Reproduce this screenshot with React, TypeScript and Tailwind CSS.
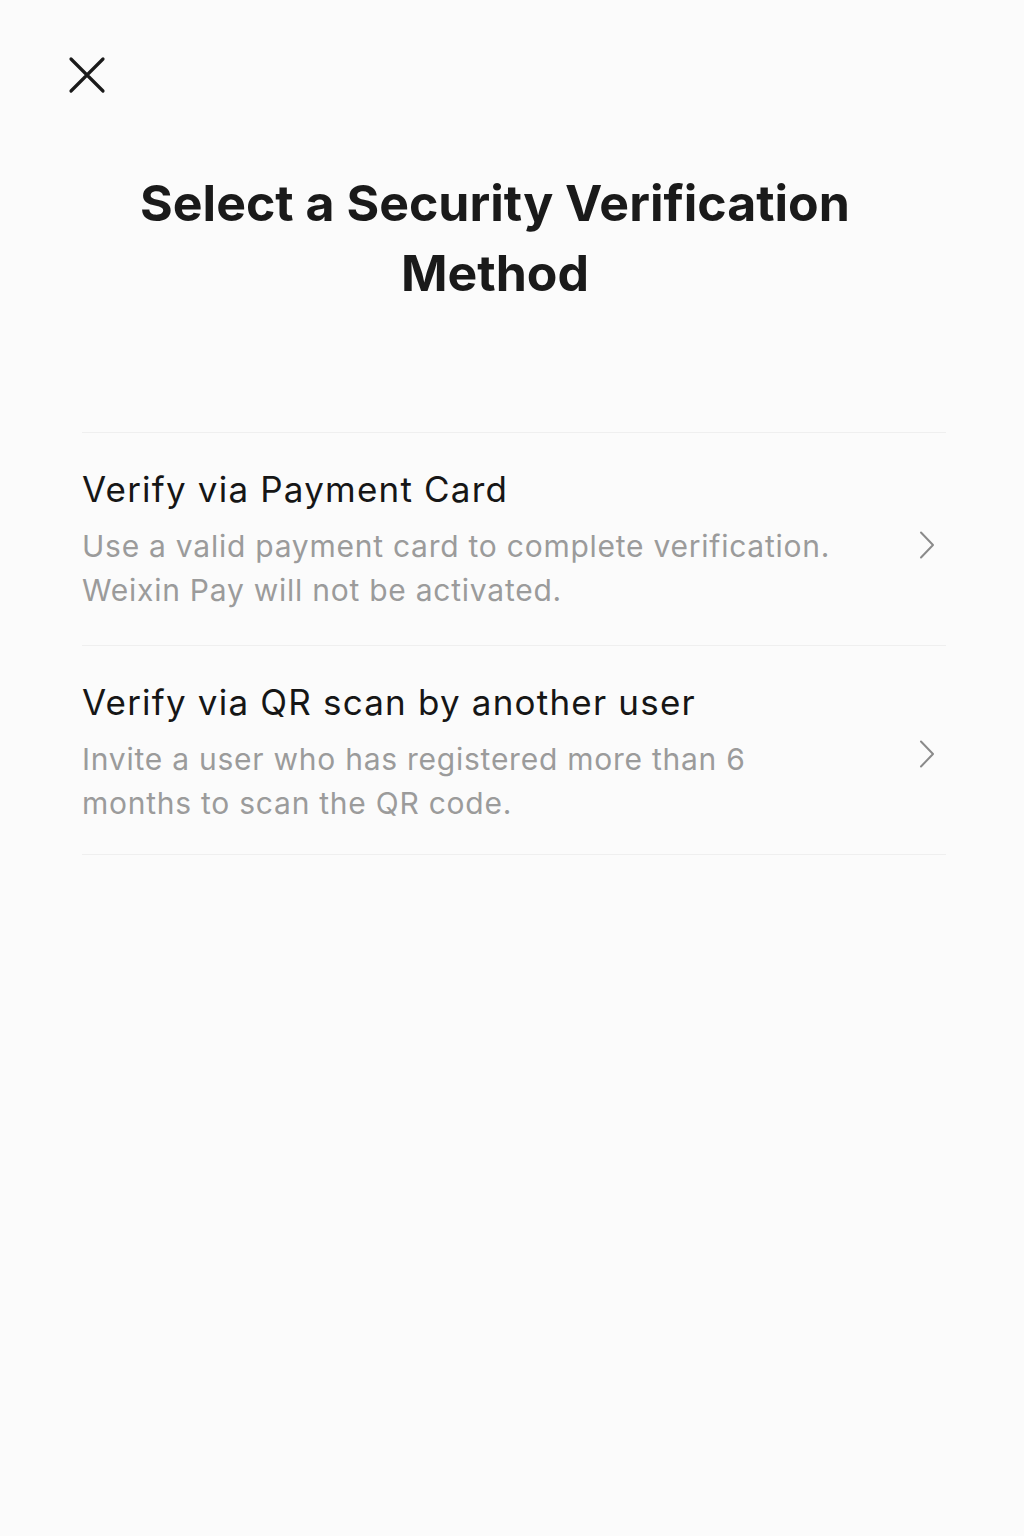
import React from "react";

function Chevron() {
  return (
    <svg width="20" height="28" viewBox="0 0 20 28" fill="none" className="shrink-0">
      <path d="M4 1.5 L16 14 L4 26.5" stroke="#8a8a8a" strokeWidth="2" strokeLinecap="round" strokeLinejoin="round" />
    </svg>
  );
}

function Item({
  title,
  desc,
  pb,
  chevronMt,
}: {
  title: string;
  desc: React.ReactNode;
  pb: string;
  chevronMt: string;
}) {
  return (
    <div className={"flex items-start border-b border-[#efefef] pt-[34px] " + pb}>
      <div className="flex-1">
        <div className="text-[35px] leading-[44px] tracking-[1.2px] text-[#161616]">{title}</div>
        <div className="mt-[13px] text-[30px] leading-[44px] tracking-[0.75px] text-[#9b9b9b]">{desc}</div>
      </div>
      <div className={"pr-[9px] pl-4 " + chevronMt}>
        <Chevron />
      </div>
    </div>
  );
}

export default function App() {
  return (
    <div className="min-h-[1536px] w-[1024px] bg-[#fbfbfb]" style={{ fontFamily: "Inter, 'Noto Sans', sans-serif" }}>
      <div className="pl-[68px] pt-[56px]">
        <svg width="38" height="38" viewBox="0 0 38 38" fill="none">
          <path d="M3 3 L35 35 M35 3 L3 35" stroke="#1a1a1a" strokeWidth="3.2" strokeLinecap="round" />
        </svg>
      </div>
      <h1 className="mt-[74px] text-center text-[50px] leading-[70px] font-bold text-[#1a1a1a] pl-[123px] pr-[157px]">
        Select a Security Verification Method
      </h1>
      <div className="ml-[82px] mr-[78px] mt-[124px] border-t border-[#efefef]">
        <Item
          title="Verify via Payment Card"
          desc={<>Use a valid payment card to complete verification.<br />Weixin Pay will not be activated.</>}
          pb="pb-[33px]"
          chevronMt="mt-[64px]"
        />
        <Item
          title="Verify via QR scan by another user"
          desc={<>Invite a user who has registered more than 6<br />months to scan the QR code.</>}
          pb="pb-[29px]"
          chevronMt="mt-[60px]"
        />
      </div>
    </div>
  );
}
